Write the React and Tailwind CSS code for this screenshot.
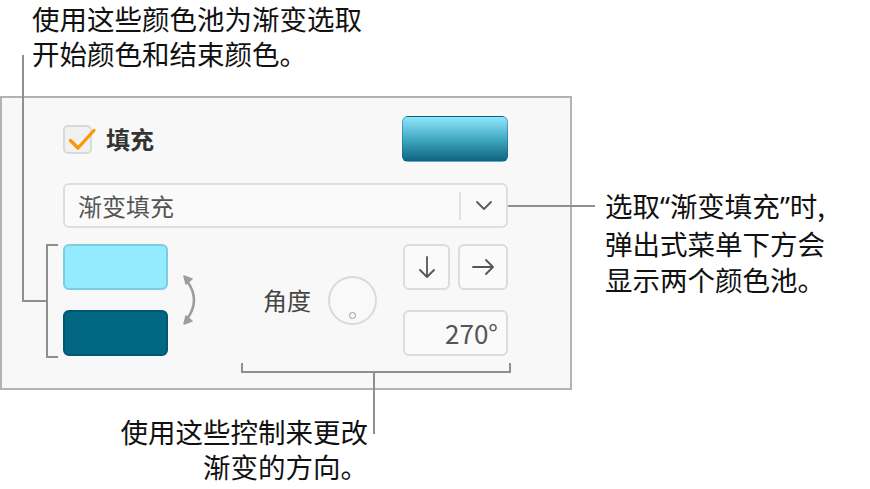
const Check = () => (
  <svg className="absolute left-0 top-0 overflow-visible" width="32" height="28" viewBox="0 0 32 28">
    <path d="M5.5 13.5 L13 21 L29 3.5" fill="none" stroke="#ff9500" strokeWidth="3.2" strokeLinecap="round" strokeLinejoin="round" />
  </svg>
);

const Panel = () => (
  <div className="box-border h-[294px] w-[572px] shrink-0 border-2 border-[#b3b3b3] bg-[#f8f8f8] pl-[61px] pr-[62px] pt-[18px]">
    <div className="flex h-[46px] items-center justify-between">
      <div className="flex items-center gap-[14px]">
        <div className="relative box-border h-[29px] w-[29px] rounded-[5px] border-2 border-[#d9d9d9] bg-[#f1f1f1]">
          <Check />
        </div>
        <span className="text-[24px] font-semibold leading-none text-[#333]">填充</span>
      </div>
      <div className="box-border h-[46px] w-[106px] rounded-[6px] border border-[#0b5b73]/40 bg-gradient-to-b from-[#8ee7fb] via-[#42a9c4] to-[#0d6580]" />
    </div>

    <div className="mt-[21px] box-border flex h-[45px] items-center rounded-[6px] border-2 border-[#dedede] bg-[#fafafa]">
      <span className="flex-1 pl-[13px] text-[24px] leading-none text-[#555]">渐变填充</span>
      <div className="h-[28px] w-[2px] bg-[#e2e2e2]" />
      <div className="flex w-[45px] items-center justify-center">
        <svg width="16" height="9" viewBox="0 0 16 9">
          <path d="M1 1 L8 8 L15 1" fill="none" stroke="#5a5a5a" strokeWidth="1.8" strokeLinecap="round" strokeLinejoin="round" />
        </svg>
      </div>
    </div>

    <div className="mt-[16px] flex items-center">
      <div className="flex w-[105px] flex-col gap-[20px]">
        <div className="box-border h-[46px] rounded-[6px] border-2 border-[#7ccde2] bg-[#94eafe]" />
        <div className="box-border h-[46px] rounded-[6px] border-2 border-[#005872] bg-[#016783]" />
      </div>
      <svg className="ml-[13px]" width="22" height="50" viewBox="0 0 22 50">
        <path d="M6 6 Q20 25 6 44" fill="none" stroke="#9d9d9d" strokeWidth="2.6" strokeLinecap="round" />
        <path d="M3 1 L11 4 L5 9 Z" fill="#9d9d9d" stroke="#9d9d9d" strokeWidth="1.5" strokeLinejoin="round" />
        <path d="M3 49 L11 46 L5 41 Z" fill="#9d9d9d" stroke="#9d9d9d" strokeWidth="1.5" strokeLinejoin="round" />
      </svg>
      <span className="ml-[60px] text-[24px] leading-none text-[#444]">角度</span>
      <div className="relative ml-[17px] box-border h-[49px] w-[49px] rounded-full border-2 border-[#dadada] bg-[#f9f9f9]">
        <div className="absolute left-[19px] top-[34px] box-border h-[7px] w-[7px] rounded-full border-[1.5px] border-[#999]" />
      </div>
      <div className="ml-auto flex w-[105px] flex-col gap-[20px]">
        <div className="flex gap-[8px]">
          <div className="box-border flex h-[46px] w-[47px] items-center justify-center rounded-[6px] border-2 border-[#dcdcdc] bg-[#fafafa]">
            <svg width="16" height="22" viewBox="0 0 16 22">
              <path d="M8 1 V21 M1 14 L8 21 L15 14" fill="none" stroke="#555" strokeWidth="1.8" strokeLinecap="round" strokeLinejoin="round" />
            </svg>
          </div>
          <div className="box-border flex h-[46px] flex-1 items-center justify-center rounded-[6px] border-2 border-[#dcdcdc] bg-[#fafafa]">
            <svg width="22" height="16" viewBox="0 0 22 16">
              <path d="M1 8 H21 M14 1 L21 8 L14 15" fill="none" stroke="#555" strokeWidth="1.8" strokeLinecap="round" strokeLinejoin="round" />
            </svg>
          </div>
        </div>
        <div className="box-border flex h-[46px] items-center justify-end rounded-[6px] border-2 border-[#dcdcdc] bg-[#fafafa] pr-[8px]">
          <span className="text-[26px] leading-none text-[#555]">270°</span>
        </div>
      </div>
    </div>
  </div>
);

export default function App() {
  return (
    <div className="relative h-[489px] w-[870px] overflow-hidden bg-white font-['Noto_Sans_CJK_SC',sans-serif] text-[#111]">
      <div className="pl-[32px] pt-[1px] text-[27.5px] leading-[35px]">
        <p>使用这些颜色池为渐变选取</p>
        <p>开始颜色和结束颜色。</p>
      </div>

      <div className="mt-[25px] flex items-start">
        <Panel />
        <div className="ml-[33px] mt-[91px] whitespace-nowrap text-[27.5px] leading-[36px]">
          <p>
            选取<span className="font-['Noto_Sans',sans-serif]">“</span>渐变填充<span className="font-['Noto_Sans',sans-serif]">”</span>时,
          </p>
          <p>弹出式菜单下方会</p>
          <p>显示两个颜色池。</p>
        </div>
      </div>

      <div className="mt-[24px] w-[368px] whitespace-nowrap text-right text-[27.5px] leading-[35px]">
        <p>使用这些控制来更改</p>
        <p>渐变的方向。</p>
      </div>

      {/* callout lines */}
      <svg className="pointer-events-none absolute left-0 top-0" width="870" height="489" viewBox="0 0 870 489">
        <g fill="none" stroke="#8f8f8f" strokeWidth="2">
          <path d="M23 55 V301 H47" />
          <path d="M58 245 H47 V357 H58" />
          <path d="M508 206 H595" />
          <path d="M242 363 V372 H510 V363" />
          <path d="M374 372 V434" />
        </g>
      </svg>
    </div>
  );
}
